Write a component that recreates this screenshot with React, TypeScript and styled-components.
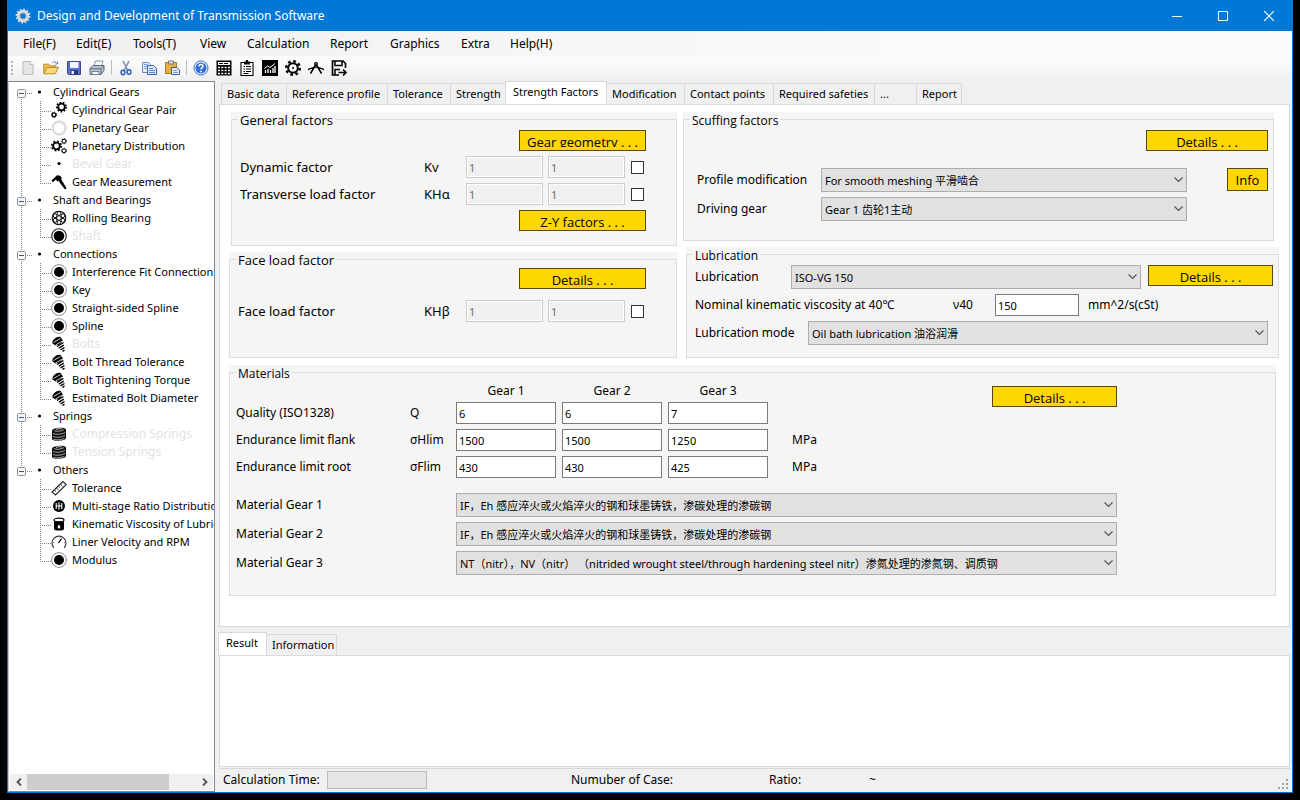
import React, { useId, useState } from 'react';
import styled, { createGlobalStyle, css } from 'styled-components';

const formFont = '"Open Sans", "Noto Sans", "Noto Sans CJK SC", sans-serif';

const GlobalStyle = createGlobalStyle`
  * { box-sizing: border-box; }
  body {
    margin: 0;
    background: #000;
    color: #000;
    font-family: "Noto Sans", "Open Sans", "Noto Sans CJK SC", sans-serif;
    font-size: 11px;
    line-height: 18px;
  }
  button, input, select { font: inherit; color: inherit; margin: 0; }
`;

/* ---------- window frame ---------- */

const Desktop = styled.div`
  display: flex;
  min-height: 100vh;
  padding: 0 7px 7px;
  background: #000;
`;

const Window = styled.div`
  flex: 1;
  min-width: 0;
  display: flex;
  flex-direction: column;
  border: 1px solid #0078d7;
  border-top: 0;
  background: #f0f0f0;
`;

const TitleBar = styled.header`
  display: flex;
  align-items: center;
  height: 31px;
  padding-left: 7px;
  background: #0078d7;
  color: #fff;
`;

const Title = styled.h1`
  flex: 1;
  margin: 0 0 0 6px;
  font-size: 12px;
  font-weight: 400;
`;

const CaptionButton = styled.button`
  display: grid;
  place-items: center;
  width: 46px;
  height: 31px;
  padding: 0;
  border: 0;
  background: transparent;
`;

const MenuBar = styled.nav`
  display: flex;
  align-items: center;
  height: 25px;
  padding-left: 7px;
  background: linear-gradient(90deg, #f0f0f0, #fcfcfc 80%);
`;

const MenuItem = styled.button<{ $width: number }>`
  width: ${(p) => p.$width}px;
  padding: 0 8px;
  border: 0;
  background: transparent;
  font-size: 12px;
  text-align: left;
  white-space: nowrap;
`;

const ToolStrip = styled.div`
  display: flex;
  align-items: center;
  gap: 7px;
  height: 25px;
  padding: 0 0 2px 3px;
  background: linear-gradient(#fcfcfc, #fafafa 30%, #efefef);
`;

const ToolButton = styled.button`
  display: block;
  width: 16px;
  height: 16px;
  padding: 0;
  border: 0;
  background: transparent;
  svg { display: block; }
`;

const ToolSeparator = styled.span`
  width: 1px;
  height: 15px;
  margin: 0 -1px;
  background: #bdbdbd;
`;

const Body = styled.div`
  flex: 1;
  display: flex;
  min-height: 0;
`;

/* ---------- tree ---------- */

const Sidebar = styled.aside`
  flex: none;
  display: flex;
  flex-direction: column;
  width: 207px;
  padding: 1px 0 1px;
  border: 1px solid #828790;
  border-left-color: #c8cacd;
  background: #fff;
`;

const Tree = styled.ul`
  flex: 1;
  margin: 0;
  padding: 0;
  list-style: none;
  overflow: hidden;
`;

const SubTree = styled.ul`
  margin: 0;
  padding: 0;
  list-style: none;
`;

const TreeRow = styled.div<{ $disabled?: boolean }>`
  display: flex;
  align-items: center;
  height: 18px;
  white-space: nowrap;
  color: ${(p) => (p.$disabled ? '#e3e3e3' : '#000')};
  font-size: ${(p) => (p.$disabled ? 12 : 11)}px;
  svg { flex: none; color: #000; }
`;

const TreeText = styled.span`
  margin-left: 5px;
`;

const ScrollBar = styled.div`
  display: flex;
  height: 16px;
  margin: 0 1px;
  background: #f0f0f0;
`;

const ScrollButton = styled.button`
  display: grid;
  place-items: center;
  width: 17px;
  padding: 0;
  border: 0;
  background: transparent;
`;

const ScrollTrack = styled.div`
  flex: 1;
`;

const ScrollThumb = styled.div`
  width: 84%;
  height: 100%;
  background: #cdcdcd;
`;

/* ---------- tabs and panels ---------- */

const Main = styled.main`
  flex: 1;
  min-width: 0;
  display: flex;
  flex-direction: column;
  padding: 0 2px 0 4px;
`;

const TabList = styled.div`
  display: flex;
  align-items: flex-end;
  height: 23px;
  padding-left: 2px;
`;

const Tab = styled.button<{ $width: number; $active?: boolean }>`
  flex: none;
  width: ${(p) => p.$width}px;
  height: 21px;
  padding: 0 5px;
  border: 1px solid #d9d9d9;
  border-width: 1px 1px 0 0;
  background: #f0f0f0;
  text-align: left;
  line-height: 20px;
  white-space: nowrap;
  &:first-child { border-left-width: 1px; }
  ${(p) =>
    p.$active &&
    css`
      height: 24px;
      margin: 0 0 -1px -1px;
      padding: 0 7px 3px;
      border-left-width: 1px;
      background: #fff;
    `}
`;

const TabPane = styled.section`
  padding: 7px 10px 30px 9px;
  border: 1px solid #dadada;
  background: #fff;
`;

const ResultTabs = styled(TabList)`
  margin-top: 5px;
  padding-left: 0;
`;

const ResultPane = styled.section`
  flex: 1;
  min-height: 60px;
  border: 1px solid #dadada;
  background: #fff;
`;

const Columns = styled.div`
  display: flex;
  gap: 6px;
`;

const Column = styled.div<{ $grow: number }>`
  flex: ${(p) => p.$grow} 1 0;
  min-width: 0;
  display: flex;
  flex-direction: column;
  gap: 6px;
`;

const GroupShade = styled.div<{ $margin?: string; $height: number }>`
  margin: ${(p) => p.$margin ?? '0'};
  min-height: ${(p) => p.$height}px;
  display: flex;
  background: #f5f5f5;
`;

const GroupFrame = styled.fieldset<{ $padding: string; $compact?: boolean }>`
  flex: 1;
  min-width: 0;
  margin: 0;
  padding: ${(p) => p.$padding};
  border: 1px solid #dcdcdc;
  font-size: ${(p) => (p.$compact ? 12 : 13)}px;
`;

const GroupTitle = styled.legend<{ $outdent?: number }>`
  height: 15px;
  margin-left: -${(p) => p.$outdent ?? 2}px;
  padding: 0 2px;
  font-family: ${formFont};
  line-height: 17px;
`;

const Row = styled.div<{ $gap?: number; $top?: number; $align?: string; $justify?: string }>`
  display: flex;
  align-items: ${(p) => p.$align ?? 'center'};
  justify-content: ${(p) => p.$justify ?? 'flex-start'};
  gap: ${(p) => p.$gap ?? 0}px;
  margin-top: ${(p) => p.$top ?? 0}px;
`;

const SpreadRow = styled.div`
  flex: 1;
  min-width: 0;
  display: flex;
  align-items: center;
`;

const InsetRow = styled(SpreadRow)`
  padding-right: 5px;
`;

const Label = styled.label<{ $width?: number }>`
  ${(p) => (p.$width ? css`flex: none; width: ${p.$width}px;` : css`flex: 1;`)}
  white-space: nowrap;
`;

const Caption = styled.span<{ $width?: number; $center?: boolean }>`
  flex: none;
  width: ${(p) => (p.$width ? `${p.$width}px` : 'auto')};
  text-align: ${(p) => (p.$center ? 'center' : 'left')};
  white-space: nowrap;
`;

const UnitText = styled.span<{ $gap: number }>`
  margin-left: ${(p) => p.$gap}px;
`;

const TextField = styled.input<{ $width: number }>`
  flex: none;
  width: ${(p) => p.$width}px;
  height: 22px;
  padding: 0 2px;
  border: 1px solid #7a7a7a;
  border-radius: 0;
  background: #fff;
  font-size: 11px;
  outline: 0;
  &:disabled {
    border-color: #ccc;
    background: #f0f0f0;
    color: #6d6d6d;
    box-shadow: inset 0 0 0 1px #fff;
  }
`;

const CheckSlot = styled.span`
  display: flex;
  width: 21px;
  padding-left: 6px;
`;

const CheckBox = styled.input`
  appearance: none;
  flex: none;
  width: 13px;
  height: 13px;
  border: 1px solid #333;
  background: #fff;
  &:checked { background: #333; box-shadow: inset 0 0 0 2px #fff; }
`;

const GoldButton = styled.button<{ $width: number; $height?: number }>`
  flex: none;
  display: flex;
  align-items: flex-start;
  justify-content: center;
  width: ${(p) => p.$width}px;
  height: ${(p) => p.$height ?? 21}px;
  padding: 2px 0 0;
  border: 1px solid #574a08;
  background: #ffd700;
  font-family: ${formFont};
  font-size: 13px;
`;

const GoldText = styled.span`
  height: 14px;
  line-height: 18px;
  overflow: hidden;
  white-space: nowrap;
`;

const SelectBox = styled.div<{ $width?: number }>`
  ${(p) => (p.$width ? css`flex: none; width: ${p.$width}px;` : css`flex: 1; min-width: 0;`)}
  display: grid;
  align-items: center;
  > * { grid-area: 1 / 1; }
  > svg { justify-self: end; margin-right: 4px; pointer-events: none; }
`;

const NativeSelect = styled.select`
  appearance: none;
  width: 100%;
  height: 24px;
  padding: 1px 20px 0 3px;
  border: 1px solid #adadad;
  border-radius: 0;
  background: #e1e1e1;
  font-size: 11px;
`;

const Materials = styled.div`
  display: flex;
  justify-content: space-between;
  align-items: flex-start;
`;

const HeadRow = styled(Row)`
  padding-left: 220px;
  margin-bottom: -3px;
`;

/* ---------- status bar ---------- */

const StatusBar = styled.footer`
  display: flex;
  align-items: center;
  height: 24px;
  margin-top: 1px;
  padding: 0 0 2px 4px;
  border-top: 1px solid #d7d7d7;
  font-size: 12px;
`;

const StatusCell = styled.span<{ $width: number }>`
  width: ${(p) => p.$width}px;
  white-space: nowrap;
`;

const TimeBox = styled.span`
  width: 100px;
  height: 18px;
  margin-right: 144px;
  border: 1px solid #bcbcbc;
  background: #e6e6e6;
`;

const Grip = styled.svg`
  margin-left: auto;
  align-self: flex-end;
`;

/* ---------- drawings ---------- */

interface CogProps { cx: number; cy: number; r: number; teeth: number; ring?: number; tooth?: number; color?: string }

function Cog({ cx, cy, r, teeth, ring = 2, tooth = 2, color = '#000' }: CogProps) {
  const outer = r - tooth / 2;
  const step = (2 * Math.PI * outer) / teeth;
  return (
    <g fill="none" stroke={color}>
      <circle cx={cx} cy={cy} r={outer} strokeWidth={tooth} strokeDasharray={`${step * 0.5} ${step * 0.5}`} />
      <circle cx={cx} cy={cy} r={r - tooth - ring / 2 + 0.3} strokeWidth={ring} />
    </g>
  );
}

const Glyph = ({ children, size = 16 }: { children: React.ReactNode; size?: number }) => (
  <svg width={size} height={size} viewBox="0 0 16 16" aria-hidden="true">{children}</svg>
);

const toolIcons: Record<string, React.ReactNode> = {
  New: (
    <>
      <path d="M3 1.500h7l3 3v10H3z" fill="#e6e6e6" stroke="#bbb" />
      <path d="M10 1.500v3h3" fill="#fff" stroke="#bbb" />
    </>
  ),
  Open: (
    <>
      <path d="M.8 13.500V4.200h5l1.400 1.600h5.600v2.500" fill="#f0bf55" stroke="#b88d30" />
      <path d="M.8 13.800 4 7.500h11.500l-3.300 6.300z" fill="#fbd877" stroke="#b88d30" />
      <path d="M9 3c2-2 4-1.500 5 .8M14.600 1.500V4h-2.500" fill="none" stroke="#6b87ad" />
    </>
  ),
  Save: (
    <>
      <path d="M1.500 1.500h13v13h-12l-1-1z" fill="#5a70cf" stroke="#3a459c" />
      <path d="M4 2h8.500v6H4z" fill="#f4f7ff" />
      <path d="M4.500 10h7.500v4.500H4.500z" fill="#2b3578" />
      <path d="M5.500 11h2.500v3H5.500z" fill="#eef" />
    </>
  ),
  Print: (
    <>
      <path d="M5 6 6.500 1h7.500l-1.500 5z" fill="#fff" stroke="#8293a8" />
      <path d="M1 8.500 4 5.500h11v5l-3 4H1z" fill="#b9c3d1" stroke="#5a6a7e" />
      <path d="M1 8.800h11l3-3M12 9v5" fill="none" stroke="#5a6a7e" />
      <path d="M3 11.500h7v3H3z" fill="#f2f4f7" stroke="#75859a" />
    </>
  ),
  Cut: (
    <>
      <path d="M5 1l4.500 9M11 1 6.500 10" fill="none" stroke="#7d92b0" strokeWidth="1.600" />
      <ellipse cx="5" cy="12.500" rx="1.900" ry="2.300" fill="none" stroke="#2c5cc0" strokeWidth="1.500" />
      <ellipse cx="11" cy="12" rx="1.900" ry="2.300" fill="none" stroke="#2c5cc0" strokeWidth="1.500" />
    </>
  ),
  Copy: (
    <>
      <path d="M1.500 2.500h6l2 2v8h-8z" fill="#e8effc" stroke="#6d8cc4" />
      <path d="M3 4.500h4M3 6.500h4M3 8.500h3" stroke="#7fa2dc" />
      <path d="M6.500 5.500h6l3 3v6h-9z" fill="#dfe9fb" stroke="#3b62ad" />
      <path d="M8 8.500h4M8 10.500h6M8 12.500h6" stroke="#5a85cf" />
    </>
  ),
  Paste: (
    <>
      <path d="M1.500 2.500h11v11h-11z" fill="#e9ae3c" stroke="#a87a25" />
      <path d="M4.500 1h5v3h-5z" fill="#d8dde6" stroke="#77797f" />
      <path d="M7.500 7.500h5l3 2.500v4.500h-8z" fill="#e8effc" stroke="#4a5f8c" />
      <path d="M9 10.500h4M9 12.500h5" stroke="#7897cd" />
    </>
  ),
  Help: (
    <>
      <circle cx="8" cy="8" r="7" fill="#fff" stroke="#3f6fc2" />
      <circle cx="8" cy="8" r="5.600" fill="#2f6fdc" />
      <path d="M6 6.500c0-3 4.300-2.500 4 0-.2 1.200-2 1.300-2 2.800" fill="none" stroke="#fff" strokeWidth="1.500" />
      <path d="M7.200 10.700h1.600v1.500H7.200z" fill="#fff" />
    </>
  ),
  Calculator: (
    <>
      <path d="M.5.500h15v15H.5z" fill="#000" />
      <path d="M2 2h12v3H2z" fill="#fff" />
      <path d="M3 3.500h10" stroke="#000" strokeDasharray="4 1" />
      <path d="M2 7.500h12M2 10.500h12M2 13.500h12" stroke="#fff" strokeWidth="1.600" strokeDasharray="2 1.300" />
    </>
  ),
  Report: (
    <>
      <path d="M2 2.500h12v13H2z" fill="#fff" stroke="#000" strokeWidth="1.100" />
      <path d="M5 1.500h6v3H5zM7 0h2v2H7z" fill="#000" />
      <path d="M4.500 6.500h1.500M4.500 9h1.500M4.500 11.500h1.500M7 6.500h5M7 9h5M7 11.500h5M4.500 13.500h5" stroke="#000" />
    </>
  ),
  Chart: (
    <>
      <path d="M0 0h16v16H0z" fill="#000" />
      <path d="M3.500 13v-3M6 13V9M8.500 13v-3M11 13V8M13 13V6" stroke="#fff" strokeWidth="1.300" />
      <path d="m2.500 8.500 3-2.500 2.500 1.500L13 3.500" fill="none" stroke="#fff" />
    </>
  ),
  Settings: (
    <>
      <Cog cx={8} cy={8} r={8} teeth={8} ring={2} tooth={2.500} />
      <circle cx="8" cy="8" r="1" fill="#000" />
    </>
  ),
  Measure: (
    <>
      <path d="M8 4 2.500 13.500M8 4l5.500 9.500" stroke="#000" strokeWidth="1.500" fill="none" />
      <circle cx="8" cy="3.800" r="1.900" fill="#000" />
      <path d="M0 10c1.500-2 3-1.200 5-2.200s4-1 6 0 3.500.2 5 2.200" fill="none" stroke="#000" strokeWidth="1.300" />
      <circle cx="8" cy="3.800" r=".6" fill="#fff" />
    </>
  ),
  Export: (
    <>
      <path d="M8 15H1.500V1H12l2.500 2.500V8" fill="none" stroke="#000" strokeWidth="1.700" />
      <path d="M4 1v4.500h7V1M4 15V9.500h5" fill="none" stroke="#000" strokeWidth="1.500" />
      <path d="M7.500 12.500h7M12 9.500l3 3-3 3" fill="none" stroke="#000" strokeWidth="1.600" />
    </>
  ),
};

const treeIcons: Record<string, React.ReactNode> = {
  pair: (
    <>
      <Cog cx={10.500} cy={5} r={5.500} teeth={9} ring={1.900} tooth={1.500} />
      <Cog cx={3} cy={12.800} r={3.200} teeth={7} ring={1.200} tooth={1} />
    </>
  ),
  ring: <circle cx="8" cy="8" r="6.500" fill="none" stroke="#dcdcdc" strokeWidth="2.300" />,
  planets: (
    <>
      <Cog cx={5.500} cy={8} r={5.600} teeth={8} ring={1.900} tooth={1.600} />
      <Cog cx={13} cy={3.200} r={3} teeth={7} ring={1} tooth={0.900} />
      <Cog cx={13} cy={12.700} r={3} teeth={7} ring={1} tooth={0.900} />
    </>
  ),
  dot: <circle cx="8" cy="7.500" r="1.600" fill="#000" />,
  caliper: (
    <path d="M.5 6.500 6 1.300l3 .5 1.800 2-.6 1.400 5.300 9-1.500 1.300L7.500 7 6 7.300 5 5.500 1.800 8.200z" fill="#000" />
  ),
  bearing: (
    <>
      <circle cx="8" cy="8" r="6.800" fill="none" stroke="#000" strokeWidth="1.100" />
      <circle cx="8" cy="8" r="2.300" fill="none" stroke="#000" strokeWidth="1" />
      {[0, 60, 120, 180, 240, 300].map((a) => (
        <circle key={a} cx="8" cy="3.500" r="1.900" fill="#fff" stroke="#000" strokeWidth=".9" transform={`rotate(${a} 8 8)`} />
      ))}
    </>
  ),
  shaft: (
    <>
      <circle cx="8" cy="8" r="7.300" fill="none" stroke="#222" strokeWidth="1.100" />
      <circle cx="8" cy="8" r="5.300" fill="#000" />
    </>
  ),
  disc: (
    <>
      <circle cx="8" cy="8" r="7.400" fill="none" stroke="#8c8c8c" />
      <circle cx="8" cy="8" r="5" fill="#000" />
    </>
  ),
  bolt: (
    <>
      <path d="M1.500 7.500C.5 4 6 0 9.500 1l2.500 3.500L9 8.500 4.500 9.500z" fill="#000" />
      <path d="m2.500 6.500 7-4M4.500 9l7-4" stroke="#fff" strokeWidth=".8" />
      <path d="m6 10.500 6.500-4M7.800 12.200l5-3M9.500 13.900l4-2.400M11.500 15.300l2-1.200" stroke="#000" strokeWidth="1.400" />
    </>
  ),
  spring: (
    <>
      <path d="M1 4.500C1 1.500 15 .5 15 3.500V12c0 3-14 4-14 1z" fill="#111" />
      <path d="M3 4.600c2 1.300 8 .6 10-1M2 7.500c3 1.400 9 .8 12-1M2 10.500c3 1.400 9 .8 12-1M2.500 13.300c3 1 8 .6 11-1" fill="none" stroke="#fff" strokeWidth=".6" />
      <path d="M5 3.500c2-.9 4-1 6-.7" stroke="#ccc" fill="none" />
    </>
  ),
  ruler: (
    <>
      <path d="m1 12 11-10.500 3.300 3L4.500 15z" fill="#fff" stroke="#222" strokeWidth="1.100" />
      <path d="m3.500 10 1.400 1.300M5.500 8l2 1.800M7.500 6.200l1.400 1.300M9.500 4.300l2 1.800" stroke="#222" />
    </>
  ),
  ratio: (
    <>
      <circle cx="8" cy="8" r="6" fill="#000" />
      <path d="M5.200 5v6M8 4.300v7.400M10.800 5v6M5.200 8h5.600" stroke="#fff" strokeWidth="1.100" />
    </>
  ),
  oil: (
    <>
      <path d="M3 5.500h10V13c0 2-10 2-10 0z" fill="#000" />
      <ellipse cx="8" cy="4" rx="5" ry="1.800" fill="#fff" stroke="#000" strokeWidth="1.200" />
      <path d="M8 8.500c2.300 3.200 1 4 0 4s-2.300-.8 0-4" fill="#fff" />
    </>
  ),
  gauge: (
    <>
      <path d="M2.800 13.800a7 7 0 1 1 10.400 0" fill="none" stroke="#333" strokeWidth="1.100" />
      <path d="m7.500 9 3-4.500" stroke="#000" strokeWidth="1.300" />
      <path d="M8 2v1.500M2 8.500h1.200M12.800 8.500H14" stroke="#777" />
    </>
  ),
};

const Chevron = () => (
  <svg width="9" height="6" viewBox="0 0 9 6" aria-hidden="true">
    <path d="m.5.500 4 4 4-4" fill="none" stroke="#555" strokeWidth="1.200" />
  </svg>
);

/* ---------- tree data ---------- */

interface Leaf { text: string; icon: string; disabled?: boolean }
interface Branch { text: string; items: Leaf[] }

const branches: Branch[] = [
  {
    text: 'Cylindrical Gears',
    items: [
      { text: 'Cylindrical Gear Pair', icon: 'pair' },
      { text: 'Planetary Gear', icon: 'ring' },
      { text: 'Planetary Distribution', icon: 'planets' },
      { text: 'Bevel Gear', icon: 'dot', disabled: true },
      { text: 'Gear Measurement', icon: 'caliper' },
    ],
  },
  {
    text: 'Shaft and Bearings',
    items: [
      { text: 'Rolling Bearing', icon: 'bearing' },
      { text: 'Shaft', icon: 'shaft', disabled: true },
    ],
  },
  {
    text: 'Connections',
    items: [
      { text: 'Interference Fit Connections', icon: 'disc' },
      { text: 'Key', icon: 'disc' },
      { text: 'Straight-sided Spline', icon: 'disc' },
      { text: 'Spline', icon: 'disc' },
      { text: 'Bolts', icon: 'bolt', disabled: true },
      { text: 'Bolt Thread Tolerance', icon: 'bolt' },
      { text: 'Bolt Tightening Torque', icon: 'bolt' },
      { text: 'Estimated Bolt Diameter', icon: 'bolt' },
    ],
  },
  {
    text: 'Springs',
    items: [
      { text: 'Compression Springs', icon: 'spring', disabled: true },
      { text: 'Tension Springs', icon: 'spring', disabled: true },
    ],
  },
  {
    text: 'Others',
    items: [
      { text: 'Tolerance', icon: 'ruler' },
      { text: 'Multi-stage Ratio Distribution', icon: 'ratio' },
      { text: 'Kinematic Viscosity of Lubricant', icon: 'oil' },
      { text: 'Liner Velocity and RPM', icon: 'gauge' },
      { text: 'Modulus', icon: 'disc' },
    ],
  },
];

function BranchGutter({ first, last }: { first: boolean; last: boolean }) {
  return (
    <svg width="44" height="18" viewBox="0 0 44 18" aria-hidden="true">
      <g stroke="#808080" strokeDasharray="1 1">
        {!first && <path d="M12.500 0v6" />}
        {!last && <path d="M12.500 16v2" />}
        <path d="M18 10.500h6" />
      </g>
      <rect x="8.500" y="6.500" width="8" height="8" rx="1" fill="#f6f6f6" stroke="#919191" />
      <path d="M10 10.500h5" stroke="#3b53a5" />
      <circle cx="30.500" cy="9" r="1.600" fill="#000" />
    </svg>
  );
}

function LeafGutter({ lastLeaf, lastBranch }: { lastLeaf: boolean; lastBranch: boolean }) {
  return (
    <svg width="42" height="18" viewBox="0 0 42 18" aria-hidden="true">
      <g stroke="#808080" strokeDasharray="1 1">
        {!lastBranch && <path d="M12.500 0v18" />}
        <path d={lastLeaf ? 'M31.500 0v11' : 'M31.500 0v18'} />
        <path d="M33 10.500h9" />
      </g>
    </svg>
  );
}

/* ---------- form parts ---------- */

const tabs: [string, number][] = [
  ['Basic data', 66],
  ['Reference profile', 101],
  ['Tolerance', 63],
  ['Strength', 55],
  ['Strength Factors', 102],
  ['Modification', 78],
  ['Contact points', 89],
  ['Required safeties', 101],
  ['...', 42],
  ['Report', 45],
];

const menus: [string, number][] = [
  ['File(F)', 53],
  ['Edit(E)', 57],
  ['Tools(T)', 67],
  ['View', 47],
  ['Calculation', 83],
  ['Report', 60],
  ['Graphics', 71],
  ['Extra', 49],
  ['Help(H)', 60],
];

const resultTabs: [string, number][] = [
  ['Result', 49],
  ['Information', 70],
];

function Gold({ width, height, children }: { width: number; height?: number; children: string }) {
  return (
    <GoldButton type="button" $width={width} $height={height}>
      <GoldText>{children}</GoldText>
    </GoldButton>
  );
}

function Choice({ id, width, options }: { id: string; width?: number; options: string[] }) {
  return (
    <SelectBox $width={width}>
      <NativeSelect id={id}>
        {options.map((o) => <option key={o}>{o}</option>)}
      </NativeSelect>
      <Chevron />
    </SelectBox>
  );
}

function FactorRow({ label, symbol }: { label: string; symbol: string }) {
  const id = useId();
  const [custom, setCustom] = useState(false);
  return (
    <Row $top={5}>
      <Label htmlFor={id}>{label}</Label>
      <Caption $width={42}>{symbol}</Caption>
      <Row $gap={5}>
        <TextField id={id} $width={77} defaultValue="1" disabled={!custom} />
        <TextField $width={77} defaultValue="1" disabled={!custom} aria-label={`${label}, second value`} />
      </Row>
      <CheckSlot>
        <CheckBox type="checkbox" checked={custom} onChange={() => setCustom(!custom)} aria-label={`Edit ${label}`} />
      </CheckSlot>
    </Row>
  );
}

function GearRow({ label, symbol, values, unit }: { label: string; symbol: string; values: string[]; unit?: string }) {
  const id = useId();
  return (
    <Row $top={5}>
      <Label htmlFor={id} $width={174}>{label}</Label>
      <Caption $width={46}>{symbol}</Caption>
      <Row $gap={6}>
        {values.map((v, i) => (
          <TextField key={i} id={i === 0 ? id : undefined} $width={100} defaultValue={v} aria-label={i ? `${label}, Gear ${i + 1}` : undefined} />
        ))}
        {unit && <UnitText $gap={18}>{unit}</UnitText>}
      </Row>
    </Row>
  );
}

const inductionSteel = 'IF，Eh 感应淬火或火焰淬火的钢和球墨铸铁，渗碳处理的渗碳钢';
const nitridedSteel = 'NT（nitr），NV（nitr） （nitrided wrought steel/through hardening steel nitr）渗氮处理的渗氮钢、调质钢';

export default function App() {
  const [tab, setTab] = useState('Strength Factors');
  const [pane, setPane] = useState('Result');

  return (
    <Desktop>
      <GlobalStyle />
      <Window>
        <TitleBar>
          <Glyph>
            <Cog cx={8} cy={8} r={7.500} teeth={12} ring={3.400} tooth={1.600} color="#d5dde2" />
            <circle cx="8" cy="8" r="3" fill="none" stroke="#8799a3" />
          </Glyph>
          <Title>Design and Development of Transmission Software</Title>
          <CaptionButton type="button" aria-label="Minimize">
            <svg width="10" height="10"><path d="M0 5.500h10" stroke="#fff" /></svg>
          </CaptionButton>
          <CaptionButton type="button" aria-label="Maximize">
            <svg width="10" height="10"><path d="M.5.500h9v9h-9z" fill="none" stroke="#fff" /></svg>
          </CaptionButton>
          <CaptionButton type="button" aria-label="Close">
            <svg width="10" height="10"><path d="m0 0 10 10M10 0 0 10" stroke="#fff" strokeWidth="1.200" /></svg>
          </CaptionButton>
        </TitleBar>

        <MenuBar>
          {menus.map(([name, width]) => <MenuItem key={name} type="button" $width={width}>{name}</MenuItem>)}
        </MenuBar>

        <ToolStrip>
          <svg width="2" height="14" aria-hidden="true"><path d="M1 0v14" stroke="#b5b5b5" strokeWidth="2" strokeDasharray="2 2" /></svg>
          {Object.entries(toolIcons).map(([name, drawing]) => (
            <React.Fragment key={name}>
              {(name === 'Cut' || name === 'Help') && <ToolSeparator />}
              <ToolButton type="button" aria-label={name}><Glyph>{drawing}</Glyph></ToolButton>
            </React.Fragment>
          ))}
        </ToolStrip>

        <Body>
          <Sidebar>
            <Tree>
              {branches.map((b, bi) => {
                const lastBranch = bi === branches.length - 1;
                return (
                  <li key={b.text}>
                    <TreeRow>
                      <BranchGutter first={bi === 0} last={lastBranch} />
                      {b.text}
                    </TreeRow>
                    <SubTree>
                      {b.items.map((leaf, i) => (
                        <li key={leaf.text}>
                          <TreeRow $disabled={leaf.disabled}>
                            <LeafGutter lastLeaf={i === b.items.length - 1} lastBranch={lastBranch} />
                            <Glyph>{treeIcons[leaf.icon]}</Glyph>
                            <TreeText>{leaf.text}</TreeText>
                          </TreeRow>
                        </li>
                      ))}
                    </SubTree>
                  </li>
                );
              })}
            </Tree>
            <ScrollBar>
              <ScrollButton type="button" aria-label="Scroll left">
                <svg width="6" height="8"><path d="M5 .5 1.500 4 5 7.500" fill="none" stroke="#505050" strokeWidth="1.800" /></svg>
              </ScrollButton>
              <ScrollTrack><ScrollThumb /></ScrollTrack>
              <ScrollButton type="button" aria-label="Scroll right">
                <svg width="6" height="8"><path d="M1 .5 4.500 4 1 7.500" fill="none" stroke="#505050" strokeWidth="1.800" /></svg>
              </ScrollButton>
            </ScrollBar>
          </Sidebar>

          <Main>
            <TabList role="tablist">
              {tabs.map(([name, width]) => (
                <Tab key={name} type="button" role="tab" $width={width} $active={tab === name} aria-selected={tab === name} onClick={() => setTab(name)}>
                  {name}
                </Tab>
              ))}
            </TabList>
            <TabPane>
              <Columns>
                <Column $grow={448}>
                  <GroupShade $margin="0 0 0 2px" $height={134}>
                    <GroupFrame $padding="3px 30px 0 8px">
                      <GroupTitle>General factors</GroupTitle>
                      <Row $justify="flex-end"><Gold width={127}>Gear geometry . . .</Gold></Row>
                      <FactorRow label="Dynamic factor" symbol="Kv" />
                      <FactorRow label="Transverse load factor" symbol="KHα" />
                      <Row $top={5} $justify="flex-end"><Gold width={127}>Z-Y factors . . .</Gold></Row>
                    </GroupFrame>
                  </GroupShade>
                  <GroupShade $height={106}>
                    <GroupFrame $padding="1px 30px 0 8px">
                      <GroupTitle>Face load factor</GroupTitle>
                      <Row $justify="flex-end"><Gold width={127}>Details . . .</Gold></Row>
                      <Row $top={6} />
                      <FactorRow label="Face load factor" symbol="KHβ" />
                    </GroupFrame>
                  </GroupShade>
                </Column>

                <Column $grow={596}>
                  <GroupShade $margin="0 5px 0 0" $height={129}>
                    <GroupFrame $compact $padding="3px 5px 0 13px">
                      <GroupTitle $outdent={7}>Scuffing factors</GroupTitle>
                      <Row $justify="flex-end"><Gold width={122}>Details . . .</Gold></Row>
                      <Row $top={17} $gap={40} $align="flex-start">
                        <SpreadRow>
                          <Label htmlFor="profile" $width={124}>Profile modification</Label>
                          <Choice id="profile" options={['For smooth meshing 平滑啮合']} />
                        </SpreadRow>
                        <Gold width={41} height={23}>Info</Gold>
                      </Row>
                      <Row $top={5} $gap={81}>
                        <SpreadRow>
                          <Label htmlFor="driving" $width={124}>Driving gear</Label>
                          <Choice id="driving" options={['Gear 1 齿轮1主动']} />
                        </SpreadRow>
                        <span />
                      </Row>
                    </GroupFrame>
                  </GroupShade>
                  <GroupShade $margin="0 0 0 3px" $height={111}>
                    <GroupFrame $compact $padding="3px 5px 0 8px">
                      <GroupTitle>Lubrication</GroupTitle>
                      <Row $gap={7} $align="flex-start">
                        <SpreadRow>
                          <Label htmlFor="lubricant" $width={96}>Lubrication</Label>
                          <Choice id="lubricant" options={['ISO-VG 150']} />
                        </SpreadRow>
                        <Gold width={125}>Details . . .</Gold>
                      </Row>
                      <Row $top={5}>
                        <Label htmlFor="viscosity" $width={258}>Nominal kinematic viscosity at 40℃</Label>
                        <Caption $width={42}>ν40</Caption>
                        <TextField id="viscosity" $width={84} defaultValue="150" />
                        <UnitText $gap={9}>mm^2/s(cSt)</UnitText>
                      </Row>
                      <Row $top={5}>
                        <InsetRow>
                          <Label htmlFor="mode" $width={113}>Lubrication mode</Label>
                          <Choice id="mode" options={['Oil bath lubrication 油浴润滑']} />
                        </InsetRow>
                      </Row>
                    </GroupFrame>
                  </GroupShade>
                </Column>
              </Columns>

              <GroupShade $margin="7px 3px 0 0" $height={231}>
                <GroupFrame $compact $padding="2px 158px 0 6px">
                  <GroupTitle $outdent={0}>Materials</GroupTitle>
                  <Materials>
                    <div>
                      <HeadRow $gap={6}>
                        <Caption $width={100} $center>Gear 1</Caption>
                        <Caption $width={100} $center>Gear 2</Caption>
                        <Caption $width={100} $center>Gear 3</Caption>
                      </HeadRow>
                      <GearRow label="Quality (ISO1328)" symbol="Q" values={['6', '6', '7']} />
                      <GearRow label="Endurance limit flank" symbol="σHlim" values={['1500', '1500', '1250']} unit="MPa" />
                      <GearRow label="Endurance limit root" symbol="σFlim" values={['430', '430', '425']} unit="MPa" />
                    </div>
                    <Row $top={4}><Gold width={125}>Details . . .</Gold></Row>
                  </Materials>
                  <Row $top={15}>
                    <Label htmlFor="mat1" $width={220}>Material Gear 1</Label>
                    <Choice id="mat1" options={[inductionSteel, nitridedSteel]} />
                  </Row>
                  <Row $top={5}>
                    <Label htmlFor="mat2" $width={220}>Material Gear 2</Label>
                    <Choice id="mat2" options={[inductionSteel, nitridedSteel]} />
                  </Row>
                  <Row $top={5}>
                    <Label htmlFor="mat3" $width={220}>Material Gear 3</Label>
                    <Choice id="mat3" options={[nitridedSteel, inductionSteel]} />
                  </Row>
                </GroupFrame>
              </GroupShade>
            </TabPane>

            <ResultTabs role="tablist">
              {resultTabs.map(([name, width]) => (
                <Tab key={name} type="button" role="tab" $width={width} $active={pane === name} aria-selected={pane === name} onClick={() => setPane(name)}>
                  {name}
                </Tab>
              ))}
            </ResultTabs>
            <ResultPane />

            <StatusBar>
              <StatusCell $width={104}>Calculation Time:</StatusCell>
              <TimeBox />
              <StatusCell $width={198}>Numuber of Case:</StatusCell>
              <StatusCell $width={100}>Ratio:</StatusCell>
              <span>~</span>
              <Grip width="12" height="12" aria-hidden="true">
                <path d="M8 1h2v2H8zM4 5h2v2H4zM8 5h2v2H8zM0 9h2v2H0zM4 9h2v2H4zM8 9h2v2H8z" fill="#a0a0a0" />
              </Grip>
            </StatusBar>
          </Main>
        </Body>
      </Window>
    </Desktop>
  );
}
